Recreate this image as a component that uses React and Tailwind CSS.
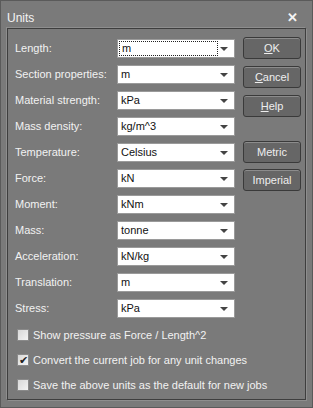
import React from 'react';

const rows = [
  ['Length:', 'm'],
  ['Section properties:', 'm'],
  ['Material strength:', 'kPa'],
  ['Mass density:', 'kg/m^3'],
  ['Temperature:', 'Celsius'],
  ['Force:', 'kN'],
  ['Moment:', 'kNm'],
  ['Mass:', 'tonne'],
  ['Acceleration:', 'kN/kg'],
  ['Translation:', 'm'],
  ['Stress:', 'kPa'],
];

const Combo = ({ value, focused }) => (
  <div className="relative flex items-center w-[118px] h-[19px] bg-white border border-[#9a9a9a] text-[#111]">
    {focused ? (
      <span className="ml-[1px] w-[99px] h-[15px] border border-dotted border-[#222] leading-[13px] pl-[2px]">{value}</span>
    ) : (
      <span className="pl-[3px] leading-[17px]">{value}</span>
    )}
    <span className="absolute right-[6px] top-[7px] w-0 h-0 border-l-[4px] border-r-[4px] border-t-[4px] border-l-transparent border-r-transparent border-t-[#444]" />
  </div>
);

const Btn = ({ children, className = '' }) => (
  <div className={`w-[58px] h-[22px] rounded-[3px] border border-[#3a3a3a] bg-[#666] shadow-[inset_0_1px_0_#8c8c8c] flex items-center justify-center text-[#eee] ${className}`}>
    {children}
  </div>
);

const Check = ({ checked, label }) => (
  <div className="flex items-center h-[14px]">
    <div className="w-[12px] h-[12px] border border-[#8a8a8a] bg-gradient-to-br from-[#d8d8d8] to-[#f4f4f4] flex items-center justify-center text-[#222] text-[11px] leading-none">
      {checked ? '✔' : ''}
    </div>
    <span className="ml-[4px] text-[#f2f2f2]">{label}</span>
  </div>
);

export default function App() {
  return (
    <div
      className="w-[313px] h-[408px] bg-[#7a7a7a] border border-[#5a5a5a] flex flex-col text-[11px] select-none"
      style={{ fontFamily: '"Liberation Sans", Arial, sans-serif' }}
    >
      <div className="h-[27px] flex items-center justify-between pl-[6px] pr-[14px] text-[#f4f4f4] text-[12px]">
        <span className="mt-[6px]">Units</span>
        <span className="mt-[6px] text-[13px] font-bold">✕</span>
      </div>
      <div className="mx-[6px] mb-[7px] flex-1 border border-[#3e3e3e] shadow-[-1px_-1px_0_#8e8e8e,1px_1px_0_#8e8e8e] flex flex-col pl-[7px] pt-[10px]">
        <div className="flex">
          <div className="flex flex-col gap-[7px]">
            {rows.map(([label, value], i) => (
              <div key={label} className="flex items-center h-[19px]">
                <span className="w-[102px] text-[#f2f2f2]">{label}</span>
                <Combo value={value} focused={i === 0} />
              </div>
            ))}
          </div>
          <div className="ml-[8px] -mt-[2px] flex flex-col">
            <Btn><span><span className="underline">O</span>K</span></Btn>
            <Btn className="mt-[7px]"><span><span className="underline">C</span>ancel</span></Btn>
            <Btn className="mt-[7px]"><span><span className="underline">H</span>elp</span></Btn>
            <Btn className="mt-[24px]">Metric</Btn>
            <Btn className="mt-[6px]">Imperial</Btn>
          </div>
        </div>
        <div className="mt-[10px] pl-[2px] flex flex-col gap-[11px]">
          <Check label="Show pressure as Force / Length^2" />
          <Check checked label="Convert the current job for any unit changes" />
          <Check label="Save the above units as the default for new jobs" />
        </div>
      </div>
    </div>
  );
}
